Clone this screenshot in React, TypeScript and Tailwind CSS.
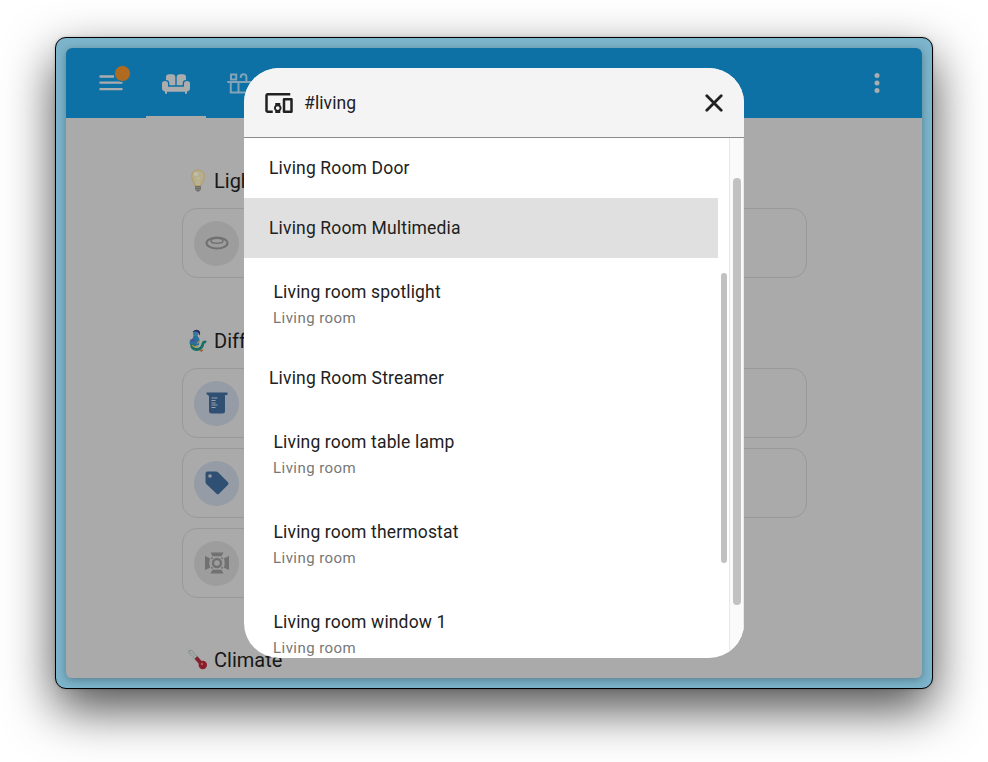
import React from "react";
import { MdDevicesOther } from "react-icons/md";

const results = [
  { name: "Living Room Door" },
  { name: "Living Room Multimedia", selected: true },
  { name: "Living room spotlight", area: "Living room" },
  { name: "Living Room Streamer" },
  { name: "Living room table lamp", area: "Living room" },
  { name: "Living room thermostat", area: "Living room" },
  { name: "Living room window 1", area: "Living room" },
];

function Sofa() {
  return (
    <svg className="translate-y-px" width="28" height="20" viewBox="0 0 28 20" fill="#aaacae">
      <path d="M4 6V3.5Q4 .3 7 .3h3Q13.300.3 13.300 3.500V11.300H7.300V9Q7.300 6 4 6Z" />
      <path d="M24 6V3.5Q24 .3 21 .3h-3Q14.700.3 14.700 3.500V11.300H20.700V9Q20.700 6 24 6Z" />
      <path d="M0 9.500Q0 7 3 7t3 2.500v3.300h16V9.500Q22 7 25 7t3 2.500V14q0 3-3 3.500V19q0 1-1 1t-1-1v-1.300H5V19q0 1-1 1t-1-1v-1.500Q0 17 0 14Z" />
    </svg>
  );
}

function Kitchen() {
  return (
    <svg width="30" height="22" viewBox="0 0 30 22" fill="none" stroke="#82a3b8" strokeWidth="2">
      <path d="M.300 9h29M3.800 9v10.500h21.500V9M3.800 19.500M11.500 9v10.500M4 1.500h5.200v5H4zM13.800 5V4q0-2.800 2.800-2.800T19.400 4v5" />
    </svg>
  );
}

function Bulb() {
  return (
    <svg width="20" height="24" viewBox="0 0 20 24">
      <path d="M10 1C6 1 3.700 3.700 3.700 7.500c0 4 2.900 6 3.300 9.500h6c.4-3.500 3.300-5.500 3.300-9.500C16.300 3.700 14 1 10 1Z" fill="#b5ae91" stroke="#b29c55" strokeWidth="1" />
      <path d="M8 8l1 2 1-2 1 2 1-2M9 10v6M11 10v6" fill="none" stroke="#c4bb91" strokeWidth=".8" />
      <ellipse cx="8" cy="5" rx="2.500" ry="2" fill="#c0bda8" />
      <path d="M7 17h6v3.500l-2 2H9l-2-2Z" fill="#6c6b68" />
      <path d="M7 18.500h6M7 20.500h6" stroke="#8d8c88" strokeWidth=".7" />
    </svg>
  );
}

function Merperson() {
  return (
    <svg width="20" height="24" viewBox="0 0 20 24">
      <path d="M4.500 3q3-3.500 6.500-1.500 2 2 .5 5L10 3.500l-4 .3Z" fill="#262a63" />
      <circle cx="7.500" cy="5" r="2.500" fill="#327b9d" />
      <path d="M5.500 7h4l2 3-.5 6-5.500 1.500-4-3q-.5-3 2.500-3.500Z" fill="#28709a" />
      <path d="M1.500 11l4-1.500 2 2-3 2Z" fill="#40559a" />
      <path d="M3.500 15q0 5.500 5.500 5.500 5-.5 6-6 1-2.500 3-1" fill="none" stroke="#176f63" strokeWidth="2.800" />
      <path d="M4 16q2 3 6 1.500M9 14.500l2-2" fill="none" stroke="#ad9140" strokeWidth="1.300" />
      <path d="M11 21.200l5-.7-2.500 2.500Z" fill="#a85c25" />
    </svg>
  );
}

function Thermometer() {
  return (
    <svg className="-translate-y-px" width="20" height="22" viewBox="0 0 20 22">
      <path d="M2.500 4l11 12" stroke="#8d9597" strokeWidth="4.500" strokeLinecap="round" />
      <path d="M2.500 4l5.500 6" stroke="#b5babb" strokeWidth="3" strokeDasharray="1 1" />
      <path d="M8 9.500l6 7" stroke="#85202b" strokeWidth="3.500" />
      <circle cx="14.800" cy="17" r="4.200" fill="#8c1c2a" />
      <circle cx="14" cy="16" r="1.200" fill="#b6535e" />
    </svg>
  );
}

function Card({ children, blue = false }: { children?: React.ReactNode; blue?: boolean }) {
  return (
    <div className="flex h-[70px] items-center rounded-[15px] border border-[#999999] pl-[11px]">
      <div className={`flex size-[45px] items-center justify-center rounded-full ${blue ? "bg-[#959ca6]" : "bg-[#9d9d9d]"}`}>
        {children}
      </div>
    </div>
  );
}

function Heading({ icon, children }: { icon: React.ReactNode; children: string }) {
  return (
    <div className="flex h-[30px] items-center gap-[6px] pl-[6px] text-[20px] text-[#171717]">
      {icon}
      <span>{children}</span>
    </div>
  );
}

function Dashboard() {
  return (
    <div className="h-full overflow-hidden rounded-[6px] bg-[#aaaaaa]">
      <header className="flex h-[70px] bg-[#0e71a5]">
        <div className="relative flex w-20 items-center pl-[33px]">
          <svg width="24" height="18" viewBox="0 0 24 18" stroke="#aaacae" strokeWidth="2.300">
            <path d="M.500 2.500h14.500M.500 8.700h23M.500 15.200h23" />
          </svg>
          <div className="absolute left-[48px] top-[17px] size-[17px] rounded-full border border-[#0e71a5] bg-[#b06b21]" />
        </div>
        <div className="flex w-[60px] items-center justify-center border-b-2 border-[#aaaaaa] pt-[2px]">
          <Sofa />
        </div>
        <div className="flex items-center pl-[21px] pt-[2px]"><Kitchen /></div>
        <svg className="my-auto ml-auto mr-[42px]" width="6" height="20" viewBox="0 0 6 20" fill="#aaacae">
          <circle cx="3" cy="2.500" r="2.500" /><circle cx="3" cy="10" r="2.500" /><circle cx="3" cy="17.500" r="2.500" />
        </svg>
      </header>
      <main className="ml-[116px] w-[625px] pt-12">
        <Heading icon={<Bulb />}>Lights</Heading>
        <div className="mb-12 mt-3 grid grid-cols-2 gap-[10px]">
          <Card>
            <svg width="24" height="14" viewBox="0 0 24 14" fill="none" stroke="#717171" strokeWidth="2">
              <ellipse cx="12" cy="7" rx="10.500" ry="5.500" /><ellipse cx="12" cy="4.800" rx="6" ry="2.500" strokeWidth="1.500" />
            </svg>
          </Card>
          <Card />
        </div>
        <Heading icon={<Merperson />}>Different</Heading>
        <div className="mb-[47px] mt-3 grid grid-cols-2 gap-[10px]">
          <Card blue>
            <svg width="22" height="22" viewBox="0 0 22 22" fill="#2f5072">
              <path d="M.500.500h21v2.500H19V19q0 2.500-2.500 2.500h-11Q3 21.500 3 19V4L.500 2Z" />
              <path d="M5.500 6h6M5.500 8.500h4M5.500 11h4M5.500 13h6M5.500 15.500h4" stroke="#98a1ad" strokeWidth="1.100" />
            </svg>
          </Card>
          <Card />
          <Card blue>
            <svg width="24" height="24" viewBox="0 0 24 24" fill="#2f5072" fillRule="evenodd">
              <path d="M2.500.500H11q1.200 0 2 .8L23 11.300q1 1.200 0 2.400L14 22.800q-1.200 1-2.400 0L1.300 13Q.500 12 .500 11V2.500q0-2 2-2ZM5 3.200a1.800 1.800 0 1 0 0 3.600 1.800 1.800 0 0 0 0-3.600Z" />
            </svg>
          </Card>
          <Card />
          <Card>
            <svg width="24" height="22" viewBox="0 0 24 22" fill="#717171">
              <path d="M5.500.500h13L16.500 4.300h-9ZM5.500 21.500h13l-2-3.800h-9ZM0 4l5 2.300q-1.500 4.700 0 9.400L0 18ZM24 4l-5 2.300q1.500 4.700 0 9.400L24 18Z" />
              <circle cx="12" cy="11" r="4" fill="none" stroke="#717171" strokeWidth="2.400" />
              <path d="M7.500 5.500L6.300 7M16.500 5.500L17.700 7M7.500 16.500L6.300 15M16.500 16.500L17.700 15" stroke="#717171" strokeWidth="1.500" />
            </svg>
          </Card>
        </div>
        <Heading icon={<Thermometer />}>Climate</Heading>
      </main>
    </div>
  );
}

function SearchDialog() {
  return (
    <div className="absolute left-[178px] top-5 flex h-[590px] w-[500px] flex-col overflow-hidden rounded-[35px] bg-white">
      <div className="flex h-[70px] shrink-0 items-center border-b border-[#8b8b8b] bg-[#f4f4f4] pl-5 pr-[21px]">
        <MdDevicesOther size={30} color="#212121" />
        <span className="ml-[10px] pt-[2px] text-[17.500px] tracking-[0.100px] text-[#212121]">#living</span>
        <svg className="ml-auto" width="18" height="18" viewBox="0 0 18 18" stroke="#212121" strokeWidth="2.800" strokeLinecap="round">
          <path d="M1.800 1.800l14.400 14.400M16.200 1.800L1.800 16.200" />
        </svg>
      </div>
      <div className="flex min-h-0 grow">
        <div className="w-[474px] overflow-hidden">
          {results.map((r) =>
            r.area ? (
              <div key={r.name} className="flex h-[90px] flex-col pl-[29.500px] pt-[22px]">
                <div className="h-6 text-[17.500px] leading-6 tracking-[0.160px] text-[#212121]">{r.name}</div>
                <div className="-ml-[0.500px] mt-[3px] h-[22px] text-[15px] leading-[22px] tracking-[0.450px] text-[#777777]">{r.area}</div>
              </div>
            ) : (
              <div key={r.name} className={`flex h-[60px] items-center pl-[25px] text-[17.500px] tracking-[0.160px] text-[#212121] ${r.selected ? "bg-[#e0e0e0]" : ""}`}>
                {r.name}
              </div>
            ),
          )}
        </div>
        <div className="w-[11px] pl-[3px] pt-[135px]"><div className="h-[290px] w-[6px] rounded-full bg-[#c1c1c1]" /></div>
        <div className="w-[15px] border-x border-[#e8e8e8] bg-[#fafafa] pl-[3px] pt-10"><div className="h-[427px] w-2 rounded-full bg-[#c1c1c1]" /></div>
      </div>
    </div>
  );
}

export default function App() {
  return (
    <div className="h-[762px] w-[988px] overflow-hidden bg-white pl-[55px] pt-[37px] font-[Roboto,sans-serif]">
      <div className="h-[652px] w-[878px] rounded-[11px] border border-black bg-[#7cb4cb] p-[10px] shadow-[0_20px_50px_rgba(0,0,0,0.700),0_0_3px_rgba(0,0,0,0.200)]">
        <div className="relative h-[630px] w-[856px] rounded-[6px] shadow-[0_2px_9px_rgba(0,0,0,0.300)]">
          <Dashboard />
          <SearchDialog />
        </div>
      </div>
    </div>
  );
}
